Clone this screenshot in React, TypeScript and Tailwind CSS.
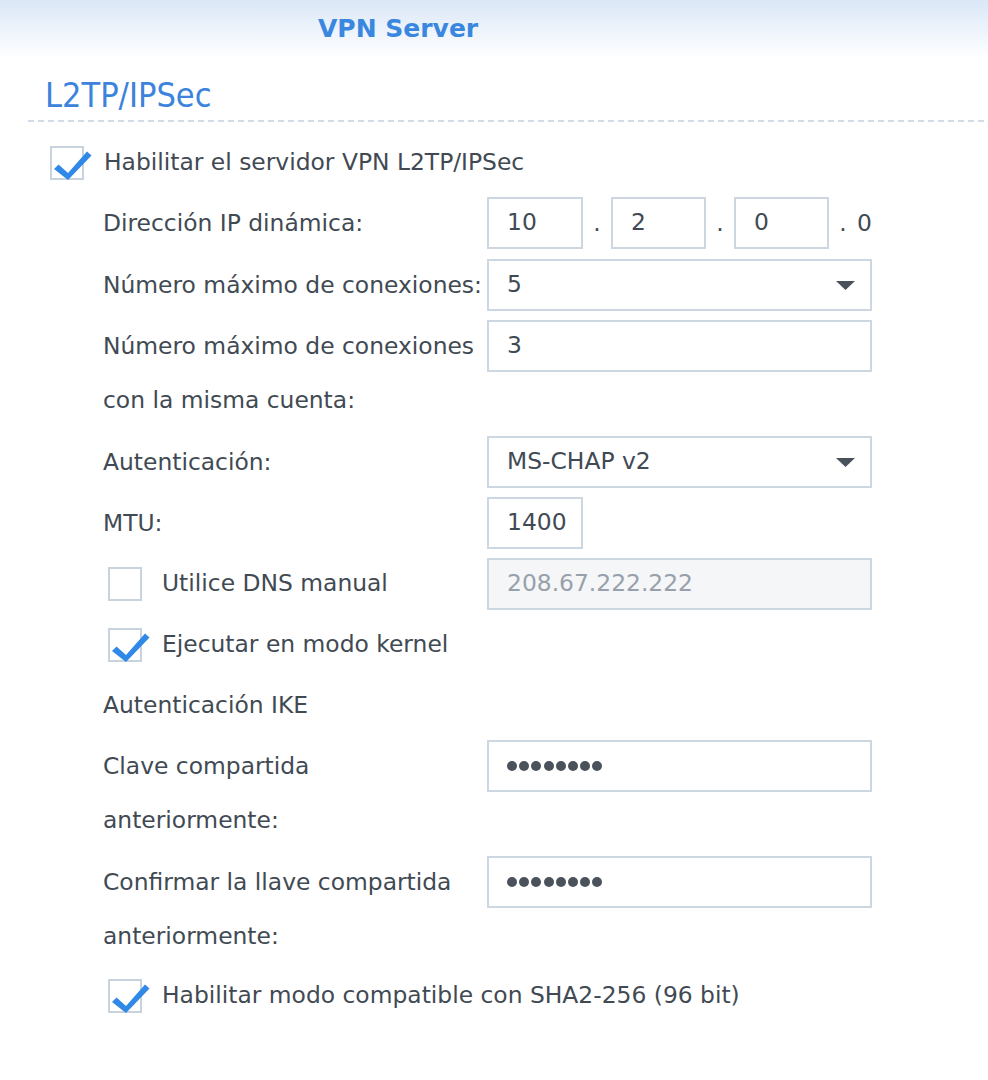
import React from "react";

const Check = () => (
  <svg
    className="absolute left-0 top-0 overflow-visible"
    width="40"
    height="36"
    viewBox="0 0 40 36"
  >
    <polygon points="2,21 6.5,16.5 16,25 35,3.5 39.5,7.5 16,32" fill="#3088e7" />
  </svg>
);

const Box = ({ checked }: { checked?: boolean }) => (
  <div className="relative w-[34px] h-[34px] shrink-0 border-2 border-[#c9d3dd] bg-white">
    {checked && <Check />}
  </div>
);

const Arrow = () => (
  <svg width="19" height="9" viewBox="0 0 19 9" className="shrink-0">
    <polygon points="0,0 19,0 9.5,9" fill="#49525b" />
  </svg>
);

const inputBase =
  "h-[52px] border-2 border-[#cdd7e1] bg-white flex items-center pl-[18px] text-[#414a53]";

const Dots = () => (
  <div className="flex gap-[2.2px]">
    {[0, 1, 2, 3, 4, 5, 6, 7].map((i) => (
      <span key={i} className="w-[10px] h-[10px] rounded-full bg-[#4a535c]" />
    ))}
  </div>
);

export default function App() {
  return (
    <div className="w-[988px] h-[1080px] bg-white font-['DejaVu_Sans',sans-serif] text-[23.4px] text-[#414a53] overflow-hidden">
      <div className="h-[58px] bg-gradient-to-b from-[#dae7f6] to-white flex items-center pl-[318px]">
        <span className="font-bold text-[25px] text-[#3a87e0]">VPN Server</span>
      </div>
      <div className="h-[62px] pt-[12px] pl-[45px] flex items-center">
        <span className="font-['DejaVu_Sans_Condensed','DejaVu_Sans',sans-serif] text-[34px] text-[#3b83dc] leading-none">
          L2TP/IPSec
        </span>
      </div>
      <div className="ml-[28px] h-[2px] bg-[repeating-linear-gradient(to_right,#d3dde8_0_6px,transparent_6px_10px)]" />

      <div className="mt-[24px] pl-[50px] flex items-center h-[34px]">
        <Box checked />
        <span className="ml-[20px]">Habilitar el servidor VPN L2TP/IPSec</span>
      </div>

      <div className="pl-[103px] flex flex-col">
        {/* IP */}
        <div className="mt-[17px] flex items-start">
          <div className="w-[384px] leading-[52px]">Dirección IP dinámica:</div>
          <div className="flex items-center">
            <div className={`${inputBase} w-[96px]`}>10</div>
            <div className="w-[28px] text-center leading-[52px]">.</div>
            <div className={`${inputBase} w-[95px]`}>2</div>
            <div className="w-[28px] text-center leading-[52px]">.</div>
            <div className={`${inputBase} w-[95px]`}>0</div>
            <div className="w-[28px] text-center leading-[52px]">.</div>
            <div className="leading-[52px]">0</div>
          </div>
        </div>

        {/* max connections */}
        <div className="mt-[10px] flex items-start">
          <div className="w-[384px] leading-[52px] whitespace-nowrap">Número máximo de conexiones:</div>
          <div className={`${inputBase} w-[385px] justify-between pr-[15px]`}>
            <span>5</span>
            <Arrow />
          </div>
        </div>

        {/* same account */}
        <div className="mt-[9px] flex items-start">
          <div className="w-[384px] leading-[54px] -mt-[1px]">
            <div>Número máximo de conexiones</div>
            <div>con la misma cuenta:</div>
          </div>
          <div className={`${inputBase} w-[385px]`}>3</div>
        </div>

        {/* auth */}
        <div className="mt-[9px] flex items-start">
          <div className="w-[384px] leading-[52px]">Autenticación:</div>
          <div className={`${inputBase} w-[385px] justify-between pr-[15px]`}>
            <span>MS-CHAP v2</span>
            <Arrow />
          </div>
        </div>

        {/* MTU */}
        <div className="mt-[9px] flex items-start">
          <div className="w-[384px] leading-[52px]">MTU:</div>
          <div className={`${inputBase} w-[96px]`}>1400</div>
        </div>

        {/* DNS */}
        <div className="mt-[9px] flex items-center">
          <div className="w-[384px] flex items-center pl-[5px]">
            <Box />
            <span className="ml-[20px]">Utilice DNS manual</span>
          </div>
          <div className="h-[52px] w-[385px] border-2 border-[#cdd7e1] bg-[#f4f6f8] flex items-center pl-[18px] text-[#98a1ab]">
            208.67.222.222
          </div>
        </div>

        {/* kernel */}
        <div className="mt-[18px] h-[34px] flex items-center pl-[5px]">
          <Box checked />
          <span className="ml-[20px]">Ejecutar en modo kernel</span>
        </div>

        {/* IKE */}
        <div className="mt-[17px] leading-[52px]">Autenticación IKE</div>

        {/* clave */}
        <div className="mt-[9px] flex items-start">
          <div className="w-[384px] leading-[54px] -mt-[1px]">
            <div>Clave compartida</div>
            <div>anteriormente:</div>
          </div>
          <div className={`${inputBase} w-[385px]`}>
            <Dots />
          </div>
        </div>

        {/* confirmar */}
        <div className="mt-[9px] flex items-start">
          <div className="w-[384px] leading-[54px] -mt-[1px]">
            <div>Confirmar la llave compartida</div>
            <div>anteriormente:</div>
          </div>
          <div className={`${inputBase} w-[385px]`}>
            <Dots />
          </div>
        </div>

        {/* sha */}
        <div className="mt-[16px] h-[34px] flex items-center pl-[5px]">
          <Box checked />
          <span className="ml-[20px]">Habilitar modo compatible con SHA2-256 (96 bit)</span>
        </div>
      </div>
    </div>
  );
}
